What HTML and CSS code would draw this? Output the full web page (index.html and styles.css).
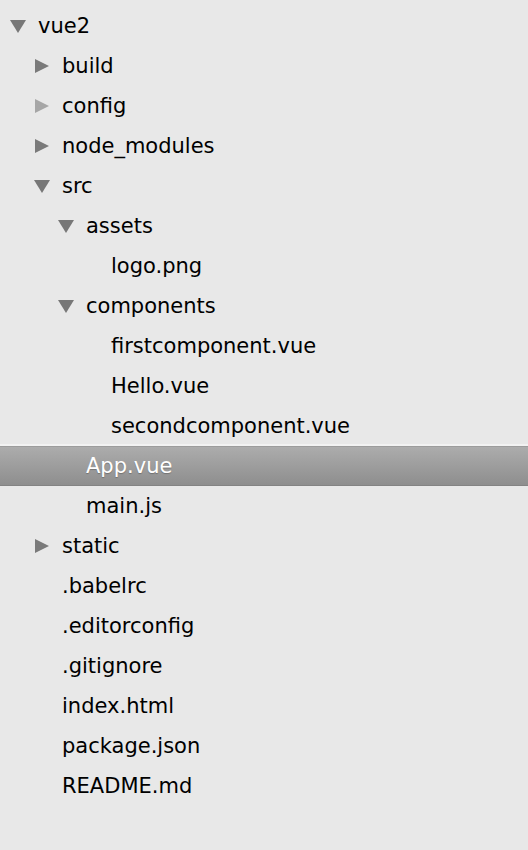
FILE: index.html
```html
<!DOCTYPE html>
<html>
<head>
<meta charset="utf-8">
<link rel="stylesheet" href="styles.css">
</head>
<body>
<ul class="tree">
  <li class="row l0"><span class="tw down"></span><span class="name">vue2</span></li>
  <li class="row l1"><span class="tw right"></span><span class="name">build</span></li>
  <li class="row l1"><span class="tw right light"></span><span class="name">config</span></li>
  <li class="row l1"><span class="tw right"></span><span class="name">node_modules</span></li>
  <li class="row l1"><span class="tw down"></span><span class="name">src</span></li>
  <li class="row l2"><span class="tw down"></span><span class="name">assets</span></li>
  <li class="row l3"><span class="tw"></span><span class="name">logo.png</span></li>
  <li class="row l2"><span class="tw down"></span><span class="name">components</span></li>
  <li class="row l3"><span class="tw"></span><span class="name">firstcomponent.vue</span></li>
  <li class="row l3"><span class="tw"></span><span class="name">Hello.vue</span></li>
  <li class="row l3"><span class="tw"></span><span class="name">secondcomponent.vue</span></li>
  <li class="row l2 selected"><span class="tw"></span><span class="name">App.vue</span></li>
  <li class="row l2"><span class="tw"></span><span class="name">main.js</span></li>
  <li class="row l1"><span class="tw right"></span><span class="name">static</span></li>
  <li class="row l1"><span class="tw"></span><span class="name">.babelrc</span></li>
  <li class="row l1"><span class="tw"></span><span class="name">.editorconfig</span></li>
  <li class="row l1"><span class="tw"></span><span class="name">.gitignore</span></li>
  <li class="row l1"><span class="tw"></span><span class="name">index.html</span></li>
  <li class="row l1"><span class="tw"></span><span class="name">package.json</span></li>
  <li class="row l1"><span class="tw"></span><span class="name">README.md</span></li>
</ul>
</body>
</html>
```
FILE: styles.css
```css
html, body {
  margin: 0;
  padding: 0;
  background: #e8e8e8;
  height: 100%;
}
body {
  font-family: "DejaVu Sans", "Open Sans", sans-serif;
  font-size: 21px;
  color: #000;
}
.tree {
  list-style: none;
  margin: 0;
  padding: 6px 0 0 0;
}
.row {
  height: 40px;
  display: flex;
  align-items: center;
  box-sizing: border-box;
}
.l0 { padding-left: 10px; }
.l1 { padding-left: 34px; }
.l2 { padding-left: 58px; }
.l3 { padding-left: 83px; }
.tw {
  width: 28px;
  flex: none;
  display: flex;
  align-items: center;
}
.tw.down::before {
  content: "";
  border-left: 8px solid transparent;
  border-right: 8px solid transparent;
  border-top: 13px solid #777;
}
.tw.right::before {
  content: "";
  border-top: 7.5px solid transparent;
  border-bottom: 7.5px solid transparent;
  border-left: 14px solid #7a7a7a;
  margin-left: 1px;
}
.tw.right.light::before {
  border-left-color: #a6a6a6;
}
.name {
  white-space: nowrap;
  padding-bottom: 1px;
}
.selected {
  background: linear-gradient(#acacac, #8e8e8e);
  border-top: 1px solid #9c9c9c;
  border-bottom: 1px solid #838383;
  box-shadow: 0 -2px 0 #f2f2f2;
  color: #fff;
}
.selected .name {
  text-shadow: 0 1px 1px rgba(0,0,0,0.25);
}
```
